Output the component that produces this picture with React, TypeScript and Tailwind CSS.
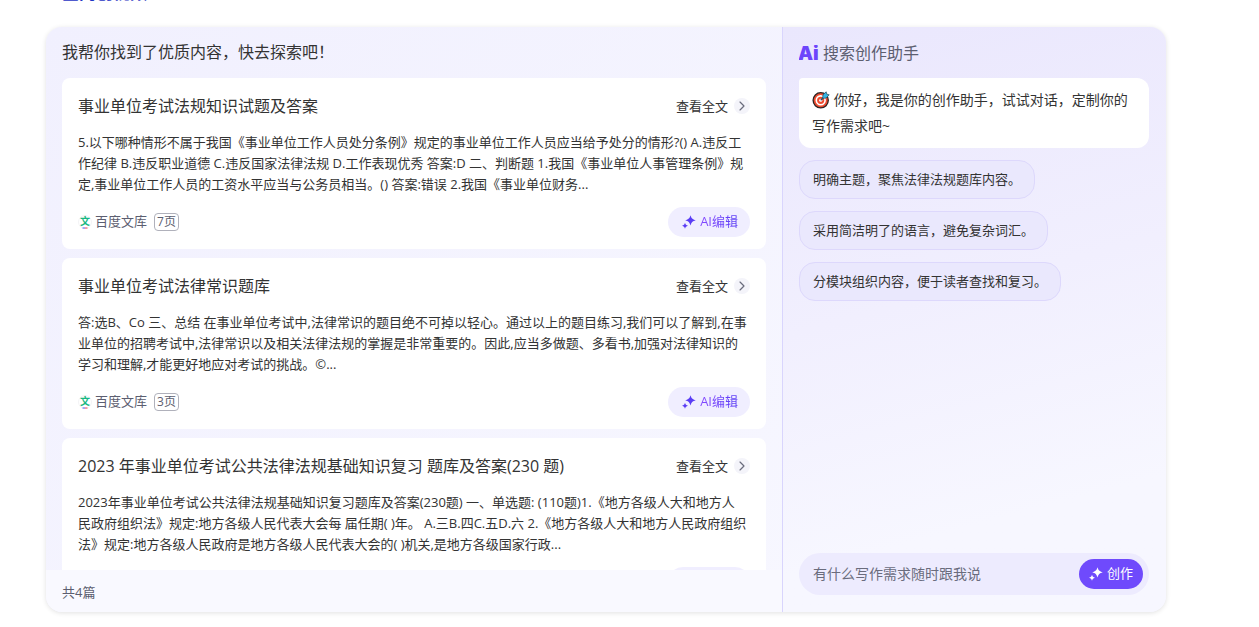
import { useState } from "react";
import { ChevronRight } from "lucide-react";

const articles = [
  {
    title: "事业单位考试法规知识试题及答案",
    summary:
      "5.以下哪种情形不属于我国《事业单位工作人员处分条例》规定的事业单位工作人员应当给予处分的情形?() A.违反工作纪律 B.违反职业道德 C.违反国家法律法规 D.工作表现优秀 答案:D 二、判断题 1.我国《事业单位人事管理条例》规定,事业单位工作人员的工资水平应当与公务员相当。() 答案:错误 2.我国《事业单位财务...",
    source: "百度文库",
    pages: 7,
  },
  {
    title: "事业单位考试法律常识题库",
    summary:
      "答:选B、Co 三、总结 在事业单位考试中,法律常识的题目绝不可掉以轻心。通过以上的题目练习,我们可以了解到,在事业单位的招聘考试中,法律常识以及相关法律法规的掌握是非常重要的。因此,应当多做题、多看书,加强对法律知识的学习和理解,才能更好地应对考试的挑战。©...",
    source: "百度文库",
    pages: 3,
  },
  {
    title: "2023 年事业单位考试公共法律法规基础知识复习 题库及答案(230 题)",
    summary:
      "2023年事业单位考试公共法律法规基础知识复习题库及答案(230题) 一、单选题: (110题)1.《地方各级人大和地方人\n民政府组织法》规定:地方各级人民代表大会每 届任期( )年。 A.三B.四C.五D.六 2.《地方各级人大和地方人民政府组织法》规定:地方各级人民政府是地方各级人民代表大会的( )机关,是地方各级国家行政...",
    source: "百度文库",
    pages: 28,
  },
];

const suggestions = [
  "明确主题，聚焦法律法规题库内容。",
  "采用简洁明了的语言，避免复杂词汇。",
  "分模块组织内容，便于读者查找和复习。",
];

function Sparkle({ className }: { className?: string }) {
  return (
    <svg viewBox="0 0 14 14" fill="currentColor" className={className} aria-hidden="true">
      <path d="M8.5 0.2C9.4 3.3 10.4 4.3 13.8 5.3C10.4 6.3 9.4 7.3 8.5 10.6C7.6 7.3 6.6 6.3 3.2 5.3C6.6 4.3 7.6 3.3 8.5 0.2Z" />
      <path d="M3 7.8C3.6 9.8 4.1 10.3 6 10.8C4.1 11.3 3.6 11.8 3 13.8C2.4 11.8 1.9 11.3 0 10.8C1.9 10.3 2.4 9.8 3 7.8Z" />
    </svg>
  );
}

function Target() {
  return (
    <svg viewBox="0 0 18 18" className="inline-block size-[18px] align-[-4px]" aria-hidden="true">
      <circle cx="8.7" cy="9.3" r="7.6" fill="#ee4a2e" stroke="#2b2424" strokeWidth="1.3" />
      <circle cx="8.7" cy="9.3" r="4.4" fill="none" stroke="#fff" strokeWidth="1.6" />
      <circle cx="8.7" cy="9.3" r="1.5" fill="#fff" />
      <path d="M8.7 9.3L13 5" stroke="#2b4f66" strokeWidth="1.3" />
      <path d="M10.6 7.4L11 3.8L14.2 0.8L14.8 3.2L17.2 3.8L14.2 7Z" fill="#35b5e5" stroke="#1f4a60" strokeWidth="0.7" />
    </svg>
  );
}

function WenkuLogo() {
  return (
    <svg viewBox="0 0 14 14" className="size-3.5" aria-hidden="true">
      <circle cx="7" cy="7" r="6.5" fill="#fff" stroke="#f3f3f5" />
      <text x="7" y="10.3" textAnchor="middle" fontSize="10" fontWeight="700" fill="#18b883">
        文
      </text>
      <path d="M4.5 13H7" stroke="#4b5cf0" />
      <path d="M7 13H9.5" stroke="#f0455c" />
    </svg>
  );
}

function ArticleCard({ article }: { article: (typeof articles)[number] }) {
  return (
    <article className="shrink-0 rounded-lg bg-white p-4 pb-3">
      <div className="flex items-center justify-between">
        <h3 className="text-base leading-6">{article.title}</h3>
        <a href="#" className="flex items-center gap-1.5 text-[13px] leading-6">
          查看全文
          <span className="flex size-4 items-center justify-center rounded-full bg-[#f4f4fa] text-[#6a6c7d]">
            <ChevronRight size={16} strokeWidth={1.75} className="shrink-0" />
          </span>
        </a>
      </div>
      <p className="mt-3.5 text-[13px] leading-[21px] whitespace-pre-line">{article.summary}</p>
      <div className="mt-3 flex items-center justify-between">
        <div className="flex items-center text-[13px] text-[#5c5e70]">
          <WenkuLogo />
          <span className="ml-[3px]">{article.source}</span>
          <span className="ml-[7px] rounded-sm border border-[#b0b1bb] px-0.5 text-xs leading-4">
            {article.pages}页
          </span>
        </div>
        <button className="flex h-[30px] items-center gap-1 rounded-full bg-[#f0eeff] pr-3 pl-3.5 text-[13px]">
          <Sparkle className="size-3.5 text-[#5a3df5]" />
          <span className="bg-gradient-to-r from-[#8549ff] to-[#5a3df5] bg-clip-text text-transparent">
            AI编辑
          </span>
        </button>
      </div>
    </article>
  );
}

export default function App() {
  const [prompt, setPrompt] = useState("");

  return (
    <div className="h-screen overflow-hidden bg-white pr-[93px] pl-[46px] font-['Open_Sans','Noto_Sans_CJK_SC',sans-serif] text-[#333]">
      <h2 className="-mt-[19px] mb-[22px] h-6 pl-4 text-[17px] leading-6 font-bold text-[#1f35c4]">
        全网创视频
      </h2>

      <div className="flex rounded-2xl bg-[#f5f5ff] shadow-[0_1px_5px_rgba(0,0,0,0.12)]">
        {/* Search results */}
        <section className="min-w-0 flex-1 rounded-l-2xl bg-gradient-to-br from-[#f1f0fe] to-[#f7f7ff]">
          <p className="px-4 pt-[13px] pb-3.5 text-base leading-6">
            我帮你找到了优质内容，快去探索吧！
          </p>
          <div className="flex h-[492px] flex-col gap-[9px] overflow-hidden px-4">
            {articles.map((article) => (
              <ArticleCard key={article.title} article={article} />
            ))}
          </div>
          <footer className="rounded-bl-2xl bg-[#f9f9ff] px-4 pt-3 pb-2.5 text-[13px] leading-5 text-[#5c5e70]">
            共4篇
          </footer>
        </section>

        {/* Writing assistant */}
        <aside className="flex w-[384px] flex-col rounded-r-2xl border-l border-[#d9d5fd] bg-linear-165 from-[#eae7fd] via-[#f1effe] via-45% to-[#f7f7ff] to-80% pt-3.5 pr-[17px] pb-[17px] pl-4">
          <h3 className="flex h-6 items-center gap-1 text-base text-[#5c5e70]">
            <svg viewBox="0 0 20 16" className="h-4 w-5" aria-hidden="true">
              <text x="-1" y="15" fontSize="19" fontFamily="Inter" fontWeight="900" fill="#6d45fb">
                Ai
              </text>
            </svg>
            搜索创作助手
          </h3>
          <p className="mt-[13px] rounded-xl rounded-tl-sm bg-white px-[13px] py-[9px] text-sm leading-[26px]">
            <Target /> 你好，我是你的创作助手，试试对话，定制你的写作需求吧~
          </p>
          <div className="mt-3 flex flex-col items-start gap-3">
            {suggestions.map((text) => (
              <button
                key={text}
                className="h-[39px] rounded-2xl border border-[#ddd8fc] bg-[#eae8fd] px-[13px] text-[13px]"
              >
                {text}
              </button>
            ))}
          </div>
          <form
            className="mt-auto flex h-[42px] items-center rounded-full bg-[#edebfe] pr-1.5 pl-3.5"
            onSubmit={(e) => e.preventDefault()}
          >
            <input
              aria-label="有什么写作需求随时跟我说"
              placeholder="有什么写作需求随时跟我说"
              value={prompt}
              onChange={(e) => setPrompt(e.target.value)}
              className="min-w-0 flex-1 bg-transparent text-sm outline-none placeholder:text-[#6a6c7d]"
            />
            <button className="flex h-[30px] items-center gap-1 rounded-full bg-[#6f4afc] px-2.5 text-[13px] text-white">
              <Sparkle className="size-3.5" />
              创作
            </button>
          </form>
        </aside>
      </div>
    </div>
  );
}
